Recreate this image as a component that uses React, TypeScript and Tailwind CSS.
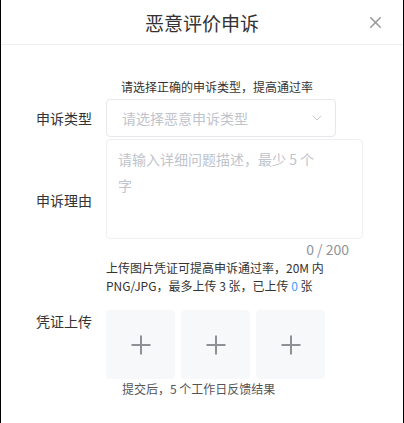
import { ChevronDown, Plus, X } from 'lucide-react'

const font = { fontFamily: '"Noto Sans CJK SC", "Noto Sans", sans-serif' }

function UploadBox() {
  return (
    <div className="w-[69px] h-[69px] rounded bg-[#f7f8fa] flex items-center justify-center">
      <Plus size={30} strokeWidth={1.6} className="text-[#8e9096]" />
    </div>
  )
}

export default function App() {
  return (
    <div className="w-[404px] h-[423px] bg-white border-x border-black overflow-hidden text-[#333]" style={font}>
      <div className="relative h-[45px] border-b border-[#eeeeee] flex items-center justify-center">
        <span className="text-[19px] text-[#333] leading-none">恶意评价申诉</span>
        <X size={19} strokeWidth={2} className="absolute right-[18px] top-[13px] text-[#999]" />
      </div>

      <div className="pt-[33px]">
        <div className="pl-[120px] text-[12px] leading-[18px] text-[#333]">请选择正确的申诉类型，提高通过率</div>

        <div className="flex items-center mt-[3px]">
          <div className="w-[105px] pl-[35px] text-[14px] text-[#333]">申诉类型</div>
          <div className="w-[230px] h-[38px] border border-[#e6e8eb] rounded flex items-center justify-between pl-[15px] pr-[10px]">
            <span className="text-[14px] text-[#c0c4cc]">请选择恶意申诉类型</span>
            <ChevronDown size={16} strokeWidth={1.4} className="text-[#c0c4cc]" />
          </div>
        </div>

        <div className="flex mt-[2px]">
          <div className="w-[105px] pl-[35px] pt-[51px] text-[14px] text-[#333]">申诉理由</div>
          <div>
            <div className="w-[257px] h-[100px] border border-[#eeeff2] rounded pl-[11px] pt-[6px]">
              <div className="w-[205px] text-[14px] leading-[26px] text-[#c0c4cc]">请输入详细问题描述，最少 5 个 字</div>
            </div>
            <div className="w-[243px] text-right text-[14px] leading-[18px] text-[#909399] mt-[1px]">0 / 200</div>
            <div className="text-[12px] leading-[18px] text-[#333] mt-[1px]">
              <div>上传图片凭证可提高申诉通过率，20M 内</div>
              <div>
                PNG/JPG，最多上传 3 张，已上传 <span className="text-[#409eff]">0</span> 张
              </div>
            </div>
          </div>
        </div>

        <div className="flex mt-[15px]">
          <div className="w-[105px] pl-[35px] pt-[1px] text-[14px] leading-[20px] text-[#333]">凭证上传</div>
          <div className="flex gap-[6px]">
            <UploadBox />
            <UploadBox />
            <UploadBox />
          </div>
        </div>

        <div className="pl-[121px] text-[12px] leading-[18px] text-[#555] mt-[1px]">提交后，5 个工作日反馈结果</div>
      </div>
    </div>
  )
}
